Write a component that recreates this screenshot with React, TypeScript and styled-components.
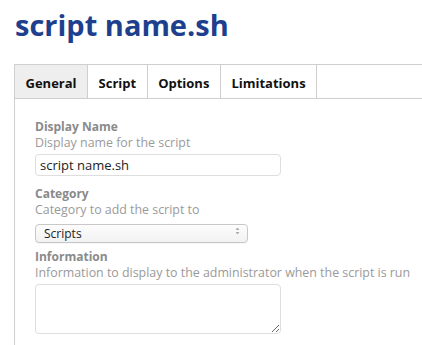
import React from "react";
import styled, { createGlobalStyle } from "styled-components";

const GlobalStyle = createGlobalStyle`
  html, body { margin: 0; padding: 0; background: #fff; overflow: hidden; }
  body { font-family: "Open Sans", "Noto Sans", sans-serif; color: #222; }
`;

const Page = styled.div`
  box-sizing: border-box;
  height: 100vh;
  padding: 8px 0 0 14px;
  display: flex;
  flex-direction: column;
`;

const Title = styled.h1`
  margin: 0 0 22px 1px;
  font-size: 29px;
  line-height: 34px;
  font-weight: 700;
  color: #1e3f8e;
`;

const Panel = styled.div`
  flex: 1;
  border-left: 1px solid #cfcfcf;
  border-top: 1px solid #cfcfcf;
`;

const TabBar = styled.div`
  display: flex;
  border-bottom: 1px solid #cfcfcf;
`;

const Tab = styled.div<{ $active?: boolean }>`
  padding: 3px 10.5px 0;
  height: 30px;
  line-height: 30px;
  font-size: 13px;
  font-weight: 700;
  color: #111;
  border-right: 1px solid #cfcfcf;
  background: ${(p) => (p.$active ? "#eeeeee" : "#fff")};
`;

const Body = styled.div`
  padding: 20px 0 0 20px;
  display: flex;
  flex-direction: column;
`;

const Field = styled.div<{ $gap?: number }>`
  display: flex;
  flex-direction: column;
  align-items: flex-start;
  margin-bottom: ${(p) => p.$gap ?? 10}px;
`;

const Label = styled.div`
  font-size: 12px;
  line-height: 16px;
  font-weight: 700;
  color: #8a8a8a;
`;

const Help = styled.div`
  font-size: 12.4px;
  line-height: 16px;
  color: #9a9a9a;
  white-space: nowrap;
`;

const TextInput = styled.input`
  box-sizing: border-box;
  margin: 3px 0 0;
  width: 246px;
  height: 22px;
  padding: 0 4px;
  border: 1px solid #dedede;
  border-radius: 4px;
  font-family: "Open Sans", sans-serif;
  font-size: 13px;
  color: #222;
  outline: none;
`;

const SelectWrap = styled.div`
  position: relative;
  margin: 3px 0 0;
  width: 213px;
  height: 19px;
`;

const Select = styled.select`
  box-sizing: border-box;
  appearance: none;
  width: 100%;
  height: 100%;
  padding: 0 0 0 8px;
  border: 1px solid #c8c8c8;
  border-radius: 4px;
  background: linear-gradient(#fdfdfd, #f2f2f2);
  box-shadow: 0 1px 0 rgba(0, 0, 0, 0.04);
  font-family: "Open Sans", sans-serif;
  font-size: 12px;
  color: #222;
  outline: none;
`;

const Arrows = styled.svg`
  position: absolute;
  right: 8px;
  top: 6px;
  pointer-events: none;
`;

const TextArea = styled.textarea`
  box-sizing: border-box;
  margin: 3px 0 0;
  width: 246px;
  height: 50px;
  border: 1px solid #dedede;
  border-radius: 4px;
  resize: both;
  outline: none;
`;

export default function App() {
  return (
    <>
      <GlobalStyle />
      <Page>
        <Title>script name.sh</Title>
        <Panel>
          <TabBar>
            <Tab $active>General</Tab>
            <Tab>Script</Tab>
            <Tab>Options</Tab>
            <Tab>Limitations</Tab>
          </TabBar>
          <Body>
            <Field>
              <Label>Display Name</Label>
              <Help>Display name for the script</Help>
              <TextInput defaultValue="script name.sh" />
            </Field>
            <Field $gap={9}>
              <Label>Category</Label>
              <Help>Category to add the script to</Help>
              <SelectWrap>
                <Select defaultValue="Scripts">
                  <option>Scripts</option>
                </Select>
                <Arrows width="5" height="8" viewBox="0 0 5 8">
                  <path d="M2.5 0.5 L4.5 3 L0.5 3 Z" fill="#aaa" />
                  <path d="M2.5 7.5 L4.5 5 L0.5 5 Z" fill="#aaa" />
                </Arrows>
              </SelectWrap>
            </Field>
            <Field>
              <Label>Information</Label>
              <Help>Information to display to the administrator when the script is run</Help>
              <TextArea />
            </Field>
          </Body>
        </Panel>
      </Page>
    </>
  );
}
